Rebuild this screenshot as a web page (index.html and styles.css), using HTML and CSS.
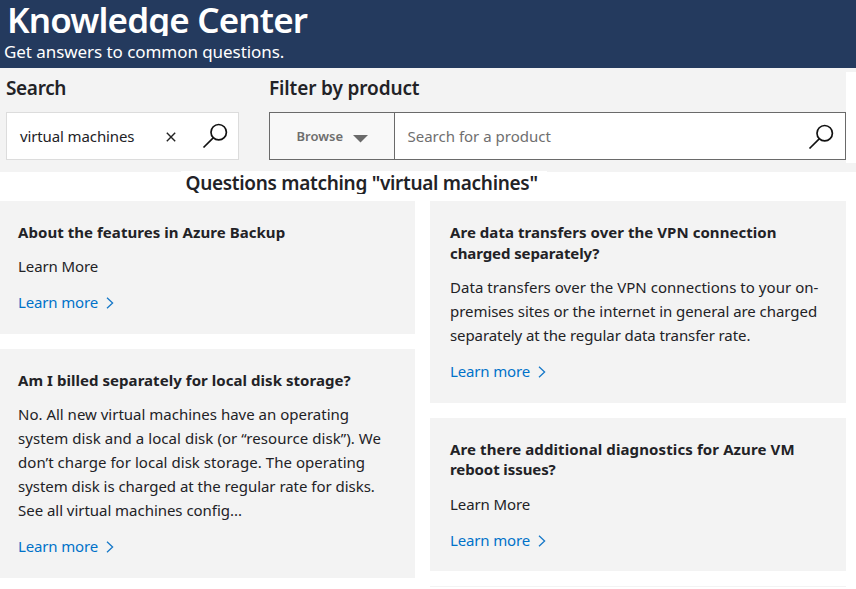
FILE: index.html
```html
<!DOCTYPE html>
<html lang="en">
<head>
<meta charset="utf-8">
<title>Knowledge Center</title>
<link rel="stylesheet" href="styles.css">
</head>
<body>
<header class="hero">
  <h1>Knowledge Center</h1>
  <p>Get answers to common questions.</p>
</header>
<section class="filters">
  <div class="field search">
    <h2 class="tight">Search</h2>
    <div class="box">
      <span class="value">virtual machines</span>
      <svg class="clear" width="10" height="10" viewBox="0 0 10 10"><path d="M.8.8l8.4 8.4M9.2.8L.8 9.2"/></svg>
      <svg class="glass" width="26" height="26" viewBox="0 0 26 26"><circle cx="16.7" cy="9.2" r="7.7"/><path d="M11.2 14.8L1.5 24.5"/></svg>
    </div>
  </div>
  <div class="field product">
    <h2>Filter by product</h2>
    <div class="box">
      <div class="browse">Browse<svg width="15" height="8" viewBox="0 0 15 8"><path d="M0 0h15L7.5 7.5z"/></svg></div>
      <span class="placeholder">Search for a product</span>
      <svg class="glass" width="26" height="26" viewBox="0 0 26 26"><circle cx="16.7" cy="9.2" r="7.7"/><path d="M11.2 14.8L1.5 24.5"/></svg>
    </div>
  </div>
  <div class="gutter"></div>
</section>
<h2 class="results-title">Questions matching "virtual machines"</h2>
<main class="results">
  <div class="column left">
    <article class="card">
      <h3>About the features in Azure Backup</h3>
      <p class="narrow-l">Learn More</p>
      <a>Learn more<svg width="8" height="12" viewBox="0 0 8 12"><path d="M1 .8L6.6 6 1 11.2"/></svg></a>
    </article>
    <article class="card">
      <h3>Am I billed separately for local disk storage?</h3>
      <p><span>No. All new virtual machines have an operating</span><span class="wide-m">system disk and a local disk (or “resource disk”). We</span><span class="wide-s">don’t charge for local disk storage. The operating</span><span class="narrow-s">system disk is charged at the regular rate for disks.</span><span class="narrow-s">See all virtual machines config...</span></p>
      <a>Learn more<svg width="8" height="12" viewBox="0 0 8 12"><path d="M1 .8L6.6 6 1 11.2"/></svg></a>
    </article>
  </div>
  <div class="column right">
    <article class="card">
      <h3><span>Are data transfers over the VPN connection</span><span class="narrow-l">charged separately?</span></h3>
      <p><span class="wide-s">Data transfers over the VPN connections to your on-</span><span class="narrow-m">premises sites or the internet in general are charged</span><span class="narrow-l">separately at the regular data transfer rate.</span></p>
      <a>Learn more<svg width="8" height="12" viewBox="0 0 8 12"><path d="M1 .8L6.6 6 1 11.2"/></svg></a>
    </article>
    <article class="card roomy">
      <h3><span class="wide-l">Are there additional diagnostics for Azure VM</span><span class="narrow-l">reboot issues?</span></h3>
      <p class="narrow-l">Learn More</p>
      <a>Learn more<svg width="8" height="12" viewBox="0 0 8 12"><path d="M1 .8L6.6 6 1 11.2"/></svg></a>
    </article>
    <div class="next-card"></div>
  </div>
</main>
</body>
</html>
```
FILE: styles.css
```css
* { box-sizing: border-box; }
body {
  margin: 0;
  height: 589px;
  overflow: hidden;
  background: #fff;
  color: #222226;
  font: 15px/24px "Noto Sans", "Open Sans", sans-serif;
}
h1, h2, h3, p { margin: 0; }
svg { fill: none; flex: none; }

.hero { height: 68px; background: #243a5e; color: #fff; }
.hero h1 {
  height: 36px;
  padding-left: 7px;
  overflow: hidden;
  font-size: 35px;
  line-height: 40px;
  font-weight: 600;
  letter-spacing: -0.85px;
}
.hero p { padding-left: 4px; font-size: 17px; line-height: 32px; letter-spacing: -0.06px; }

.filters { display: flex; height: 104px; padding-left: 6px; background: #f3f3f3; }
.field { padding-top: 6px; }
.search { width: 233px; margin-right: 30px; }
.product { width: 577px; }
h2 { font-size: 19px; line-height: 28px; font-weight: 600; letter-spacing: -0.13px; }
h2.tight { letter-spacing: -0.35px; }
.box { display: flex; align-items: center; height: 48px; margin-top: 10px; background: #fff; border: 1px solid #dcdcdc; }
.product .box { border-color: #6a6a6a; }
.gutter { flex: 1; height: 91px; margin-top: 4px; background: #fff; }
.value { width: 146px; padding-left: 13px; letter-spacing: -0.12px; }
.clear { margin: 2px 0 0 13px; stroke: #222; stroke-width: 1.4; }
.glass { margin: 0 11px 0 auto; stroke: #111; stroke-width: 1.7; }
.search .glass { margin-right: 10px; margin-bottom: 1px; }
.product .glass { margin-top: 1px; }
.browse {
  display: flex;
  align-items: center;
  width: 125px;
  height: 46px;
  padding-left: 26.5px;
  border-right: 1px solid #6a6a6a;
  background: #f8f8f8;
  color: #6e6e6e;
  font-size: 13px;
  font-weight: 600;
}
.browse svg { margin: 5px 0 0 9.5px; fill: #6a6a6a; }
.placeholder { padding-left: 12.5px; color: #6f6f6f; }

.results-title {
  width: 366px;
  height: 23px;
  margin: -1px 0 7px 181px;
  padding-left: 4.5px;
  overflow: hidden;
  background: #fff;
  line-height: 25px;
  letter-spacing: -0.3px;
  white-space: nowrap;
}
.results { display: flex; gap: 15px; }
.column { display: flex; flex-direction: column; gap: 15px; }
.left { width: 415px; }
.right { width: 416px; }
.card { padding: 21px 0 20px 18px; background: #f3f3f3; white-space: nowrap; }
.right .card { padding-left: 20px; }
.card h3 { font-size: 15px; line-height: 20.6px; font-weight: 700; letter-spacing: 0.05px; }
.card p { margin: 11.4px 0 12px; }
.card.roomy { padding-bottom: 19px; }
.card.roomy p { margin-top: 12.4px; }
.card span { display: block; }
.card a { display: flex; align-items: center; color: #0072c9; letter-spacing: -0.15px; }
.card a svg { margin: 2px 0 0 8px; stroke: #1678c8; stroke-width: 1.3; }
.next-card { height: 1px; background: #f3f3f3; }

.wide-s { letter-spacing: 0.04px; }
.wide-m { letter-spacing: 0.06px; }
.card .wide-l { letter-spacing: 0.11px; }
.narrow-s { letter-spacing: -0.035px; }
.narrow-m { letter-spacing: -0.05px; }
.narrow-l { letter-spacing: -0.09px; }
```
